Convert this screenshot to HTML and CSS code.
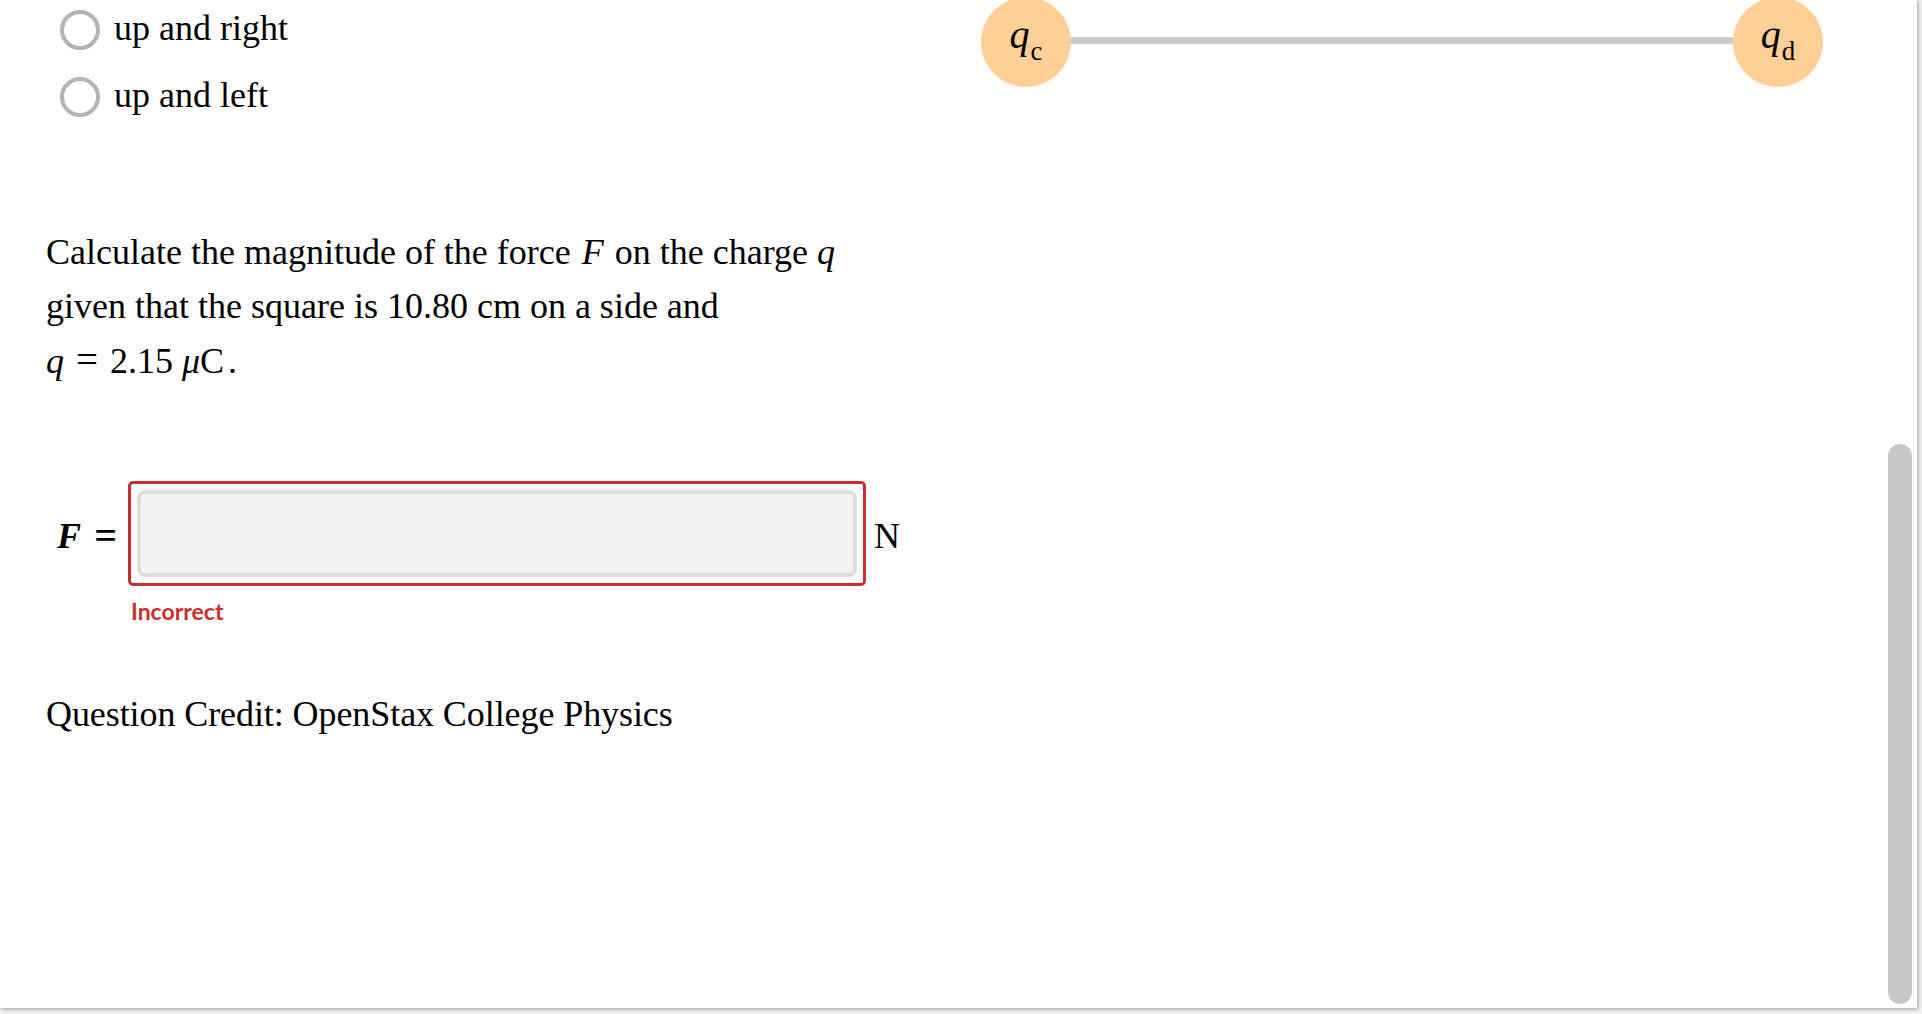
FILE: index.html
```html
<html>
<head>
  <meta charset="UTF-8" />
  <title>Question</title>
  <link rel="stylesheet" href="styles.css">
</head>
<body>

  <div class="page">

    <div class="question">
      <div class="options">
        <div class="option"><span class="radio"></span>up and right</div>
        <div class="option"><span class="radio"></span>up and left</div>
      </div>

      <p class="prompt">
        Calculate the magnitude of the force <i class="force">F</i> on the charge <i>q</i><br>
        given that the square is 10.80 cm on a side and<br>
        <i>q</i> <span class="eq">=</span> 2.15 <i>μ</i>C<span class="dot">.</span>
      </p>

      <div class="answer">
        <div class="label"><i>F</i><span class="equals">=</span></div>
        <div class="field"><div class="field-input"></div></div>
        <div class="unit">N</div>
      </div>
      <div class="feedback">Incorrect</div>

      <p class="credit">Question Credit: OpenStax College Physics</p>
    </div>

    <div class="diagram">
      <div class="charge"><i>q</i><sub>c</sub></div>
      <div class="rod"></div>
      <div class="charge"><i>q</i><sub>d</sub></div>
    </div>

    <div class="scrollbar"><div class="thumb"></div></div>
  </div>

</body>
</html>
```

FILE: styles.css
```css
body {
  margin: 0;
  background-color: #f0f0f0;
  font-family: "Liberation Serif", serif;
  font-size: 36px;
  line-height: 54px;
  color: #000;
  overflow: hidden;
}
.page {
  display: flex;
  width: 1917px;
  height: 1008px;
  background-color: white;
  box-shadow: 1px 1px 4px rgba(0,0,0,0.35);
  overflow: hidden;
}
.question {
  width: 935px;
  padding: 1px 0 0 46px;
  flex-shrink: 0;
}
.options {
  display: flex;
  flex-direction: column;
  gap: 13px;
  padding-left: 14px;
}
.option {
  display: flex;
  align-items: center;
  height: 54px;
  white-space: nowrap;
}
.radio {
  box-sizing: border-box;
  width: 40px;
  height: 40px;
  margin: 4px 14px 0 0;
  border: 4px solid #b3b3b3;
  border-radius: 50%;
}
.prompt {
  margin: 103px 0 0 0;
  white-space: nowrap;
}
.force {
  margin: 0 2px 0 2px;
}
.eq {
  margin: 0 3px;
  font-size: 39px;
}
.dot {
  margin-left: 4px;
}
.answer {
  display: flex;
  align-items: center;
  margin-top: 93px;
  padding-left: 11px;
}
.label {
  display: flex;
  justify-content: space-between;
  width: 60px;
  margin: 4px 11px 0 0;
  font-weight: bold;
}
.equals {
  font-size: 40px;
}
.field {
  box-sizing: border-box;
  width: 738px;
  height: 105px;
  padding: 6px;
  border: 3px solid #c52f30;
  border-radius: 5px;
}
.field-input {
  box-sizing: border-box;
  height: 100%;
  background-color: #f2f2f2;
  border: 4px solid #ddd;
  border-radius: 8px;
}
.unit {
  margin: 4px 0 0 8px;
}
.feedback {
  margin: 9px 0 0 85px;
  font-family: Lato, sans-serif;
  font-size: 23px;
  font-weight: bold;
  line-height: 32px;
  color: #c9302c;
}
.credit {
  margin: 60px 0 0 0;
  white-space: nowrap;
  letter-spacing: -0.08px;
}
.diagram {
  display: flex;
  align-items: center;
  width: 842px;
  height: 90px;
  margin-top: -3px;
}
.charge {
  display: flex;
  align-items: baseline;
  justify-content: center;
  width: 90px;
  height: 90px;
  flex-shrink: 0;
  background-color: #fecf96;
  border-radius: 50%;
  font-size: 40px;
  line-height: 76px;
}
.charge sub {
  margin-left: 1px;
  font-size: 27px;
  line-height: 0;
  vertical-align: baseline;
  position: relative;
  top: 12px;
}
.rod {
  flex-grow: 1;
  height: 7px;
  margin-bottom: 4px;
  background-color: #ccc;
}
.scrollbar {
  display: flex;
  align-items: flex-end;
  flex-grow: 1;
  justify-content: flex-end;
  padding: 0 5px 4px 0;
}
.thumb {
  width: 24px;
  height: 560px;
  background-color: #c8c8c8;
  border-radius: 12px;
}
```
